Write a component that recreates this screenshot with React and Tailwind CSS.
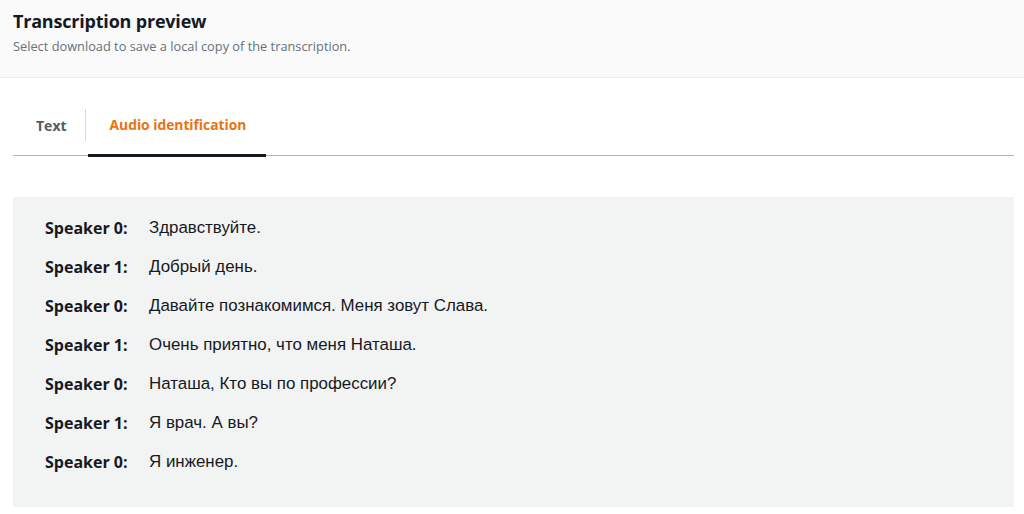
const rows = [
  ['Speaker 0:', 'Здравствуйте.'],
  ['Speaker 1:', 'Добрый день.'],
  ['Speaker 0:', 'Давайте познакомимся. Меня зовут Слава.'],
  ['Speaker 1:', 'Очень приятно, что меня Наташа.'],
  ['Speaker 0:', 'Наташа, Кто вы по профессии?'],
  ['Speaker 1:', 'Я врач. А вы?'],
  ['Speaker 0:', 'Я инженер.'],
];

const App = () => {
  return (
    <div className="min-h-screen bg-white font-['Open_Sans',sans-serif]">
      <div className="h-[78px] bg-[#fafafa] border-b border-[#eaeded] px-[13px] pt-[8px]">
        <h1 className="text-[18px] leading-[26px] font-bold text-[#16191f] tracking-[-0.2px]">Transcription preview</h1>
        <p className="text-[12.8px] leading-[18px] text-[#687078] mt-[3px]">Select download to save a local copy of the transcription.</p>
      </div>

      <div className="ml-[13px] w-[1001px] mt-[31px] flex border-b border-[#aab7b8] h-[47px]">
        <div className="flex items-center pl-[23px] pr-[18px] h-[32px] text-[14px] font-bold text-[#545b64] border-r border-[#d5dbdb]">
          Text
        </div>
        <div className="relative flex items-start pl-[24px] pr-[20px] h-[47px]">
          <span className="text-[13.8px] leading-[32px] font-bold text-[#ec7211]">Audio identification</span>
          <div className="absolute left-[2px] right-0 bottom-[-1px] h-[3px] bg-[#16191f]" />
        </div>
      </div>

      <div className="ml-[13px] mt-[41px] w-[1001px] h-[310px] bg-[#f2f3f3] pt-[11px] pl-[32px]">
        {rows.map(([who, text], i) => (
          <div key={i} className="flex items-center h-[39px]">
            <span className="w-[104px] text-[16px] font-bold text-[#16191f]">{who}</span>
            <span className="text-[16.9px] text-[#16191f] font-['Liberation_Sans',sans-serif]">{text}</span>
          </div>
        ))}
      </div>
    </div>
  );
};

export default App;
